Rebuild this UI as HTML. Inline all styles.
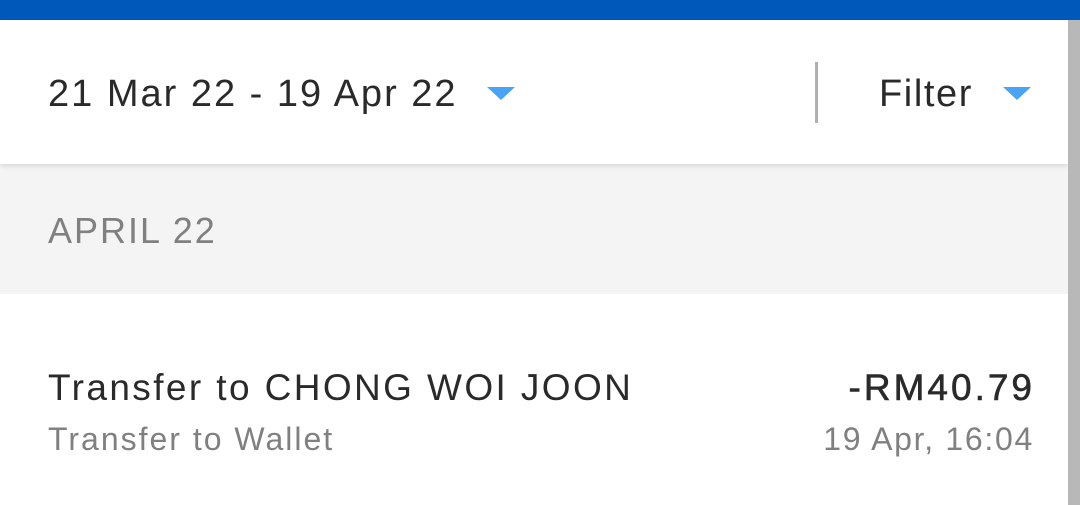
<!DOCTYPE html>
<html><head><style>
body{margin:0;width:1080px;height:505px;overflow:hidden;background:#fff;font-family:"Liberation Sans",sans-serif;position:relative}
.a{position:absolute;white-space:nowrap;line-height:1}
.tri{position:absolute;width:0;height:0;border-left:14px solid transparent;border-right:14px solid transparent;border-top:13px solid #4aa3f5}
</style></head><body>
<div style="position:absolute;left:0;top:0;width:1080px;height:20px;background:#0059ba"></div>
<div style="position:absolute;left:0;top:164px;width:1080px;height:130px;background:#f4f4f4"></div>
<div style="position:absolute;left:0;top:20px;width:1068px;height:144px;background:#fff;box-shadow:0 2px 5px rgba(0,0,0,0.12)"></div>
<div style="position:absolute;left:1068px;top:20px;width:12px;height:485px;background:#b8b8b8"></div>
<div class="a" style="left:48px;top:75px;font-size:38px;color:#2a2a2a;letter-spacing:2px">21 Mar 22 - 19 Apr 22</div>
<div class="tri" style="left:487px;top:87px"></div>
<div style="position:absolute;left:815px;top:62px;width:3px;height:61px;background:#b0b0b0"></div>
<div class="a" style="left:879px;top:75px;font-size:38px;color:#2a2a2a;letter-spacing:1.6px">Filter</div>
<div class="tri" style="left:1003px;top:87px"></div>
<div class="a" style="left:48px;top:213px;font-size:36px;color:#808080;letter-spacing:2px">APRIL 22</div>
<div class="a" style="left:48px;top:369px;font-size:37px;color:#2a2a2a;letter-spacing:2.4px">Transfer to CHONG WOI JOON</div>
<div class="a" style="left:48px;top:423px;font-size:32px;color:#808080;letter-spacing:2px">Transfer to Wallet</div>
<div class="a" style="right:45px;top:369px;font-size:37px;color:#2a2a2a;letter-spacing:3px;-webkit-text-stroke:0.6px #2a2a2a">-RM40.79</div>
<div class="a" style="right:46px;top:423px;font-size:32px;color:#808080;letter-spacing:1.7px">19 Apr, 16:04</div>
</body></html>
